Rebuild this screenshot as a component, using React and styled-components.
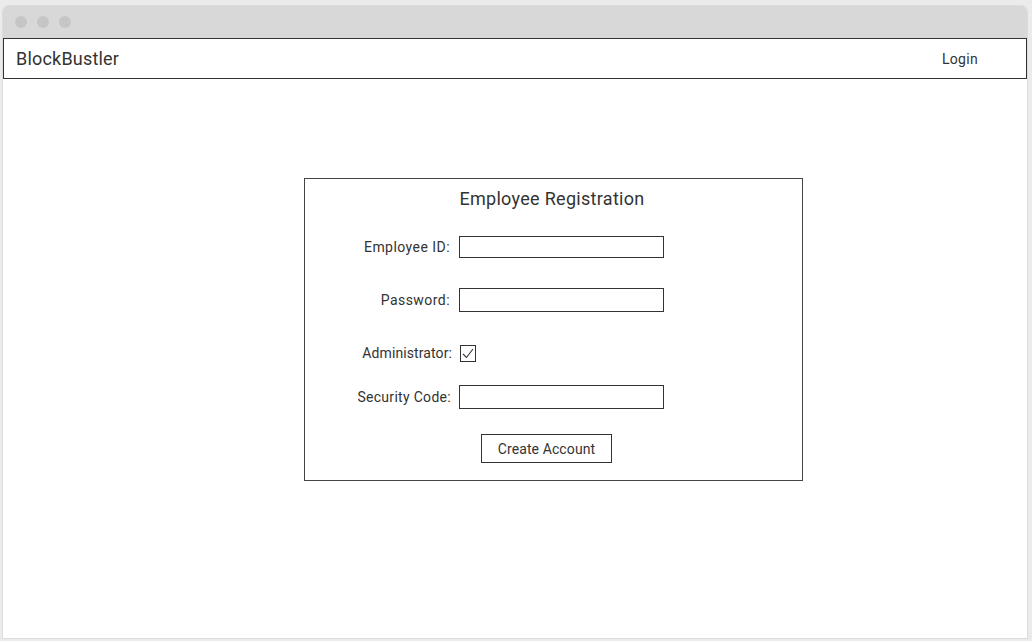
import styled, { createGlobalStyle } from "styled-components";

const GlobalStyle = createGlobalStyle`
  html, body {
    margin: 0;
    padding: 0;
    background: #ebebeb;
    font-family: Roboto, "Liberation Sans", Arial, sans-serif;
    color: #333;
  }
  * { box-sizing: border-box; }
`;

const Window = styled.div`
  margin: 5px 4px 0 2px;
  height: 634px;
  background: #fff;
  border: 1px solid #dcdcdc;
  border-radius: 6px 6px 0 0;
  display: flex;
  flex-direction: column;
  overflow: hidden;
`;

const TitleBar = styled.div`
  height: 32px;
  flex: none;
  background: #d8d8d8;
  display: flex;
  align-items: center;
  gap: 10px;
  padding-left: 12px;
`;

const Dot = styled.span`
  width: 12px;
  height: 12px;
  border-radius: 50%;
  background: #c6c6c6;
`;

const NavBar = styled.div`
  height: 41px;
  flex: none;
  border: 1px solid #333;
  display: flex;
  align-items: center;
  justify-content: space-between;
  padding: 0 48px 0 12px;
`;

const Brand = styled.div`
  font-size: 18px;
  letter-spacing: 0.2px;
`;

const NavLink = styled.a`
  font-size: 14px;
  color: #333;
  text-decoration: none;
  letter-spacing: 0.3px;
`;

const Main = styled.div`
  flex: 1;
  padding: 99px 0 0 301px;
`;

const Card = styled.div`
  width: 499px;
  border: 1px solid #444;
  padding: 8px 0 17px;
  display: flex;
  flex-direction: column;
`;

const Title = styled.h2`
  margin: 0 3px 0 0;
  font-size: 18px;
  font-weight: 400;
  line-height: 24px;
  text-align: center;
  letter-spacing: 0.3px;
`;

const Row = styled.div`
  display: flex;
  align-items: center;
  height: 24px;
  margin-top: ${(p) => p.$mt}px;
`;

const Label = styled.label`
  width: ${(p) => p.$w || 145}px;
  text-align: right;
  font-size: 14px;
  letter-spacing: ${(p) => p.$ls ?? 0.45}px;
`;

const Input = styled.input`
  margin-left: ${(p) => p.$ml || 9}px;
  width: 205px;
  height: ${(p) => p.$h || 24}px;
  border: 1px solid #333;
  border-radius: 0;
  padding: 0 4px;
  outline: none;
`;

const CheckBox = styled.span`
  margin-left: 8px;
  width: 16px;
  height: 17px;
  border: 1px solid #333;
  display: flex;
  align-items: center;
  justify-content: center;
`;

const ButtonRow = styled.div`
  margin-top: 25px;
  padding-left: 176px;
`;

const Button = styled.button`
  width: 131px;
  height: 29px;
  background: #fff;
  border: 1px solid #333;
  font-family: inherit;
  font-size: 14px;
  color: #333;
  letter-spacing: 0.1px;
`;

export default function App() {
  return (
    <>
      <GlobalStyle />
      <Window>
        <TitleBar>
          <Dot />
          <Dot />
          <Dot />
        </TitleBar>
        <NavBar>
          <Brand>BlockBustler</Brand>
          <NavLink href="#">Login</NavLink>
        </NavBar>
        <Main>
          <Card>
            <Title>Employee Registration</Title>
            <Row $mt={24}>
              <Label>Employee ID:</Label>
              <Input $h={22} />
            </Row>
            <Row $mt={29}>
              <Label>Password:</Label>
              <Input type="password" />
            </Row>
            <Row $mt={29}>
              <Label $w={147} $ls={0.1}>Administrator:</Label>
              <CheckBox>
                <svg width="12" height="11" viewBox="0 0 12 11">
                  <path d="M1 6 L4.5 9.5 L11 1" fill="none" stroke="#333" strokeWidth="1.1" />
                </svg>
              </CheckBox>
            </Row>
            <Row $mt={20}>
              <Label $w={146} $ls={0.3}>Security Code:</Label>
              <Input $ml={8} />
            </Row>
            <ButtonRow>
              <Button>Create Account</Button>
            </ButtonRow>
          </Card>
        </Main>
      </Window>
    </>
  );
}
